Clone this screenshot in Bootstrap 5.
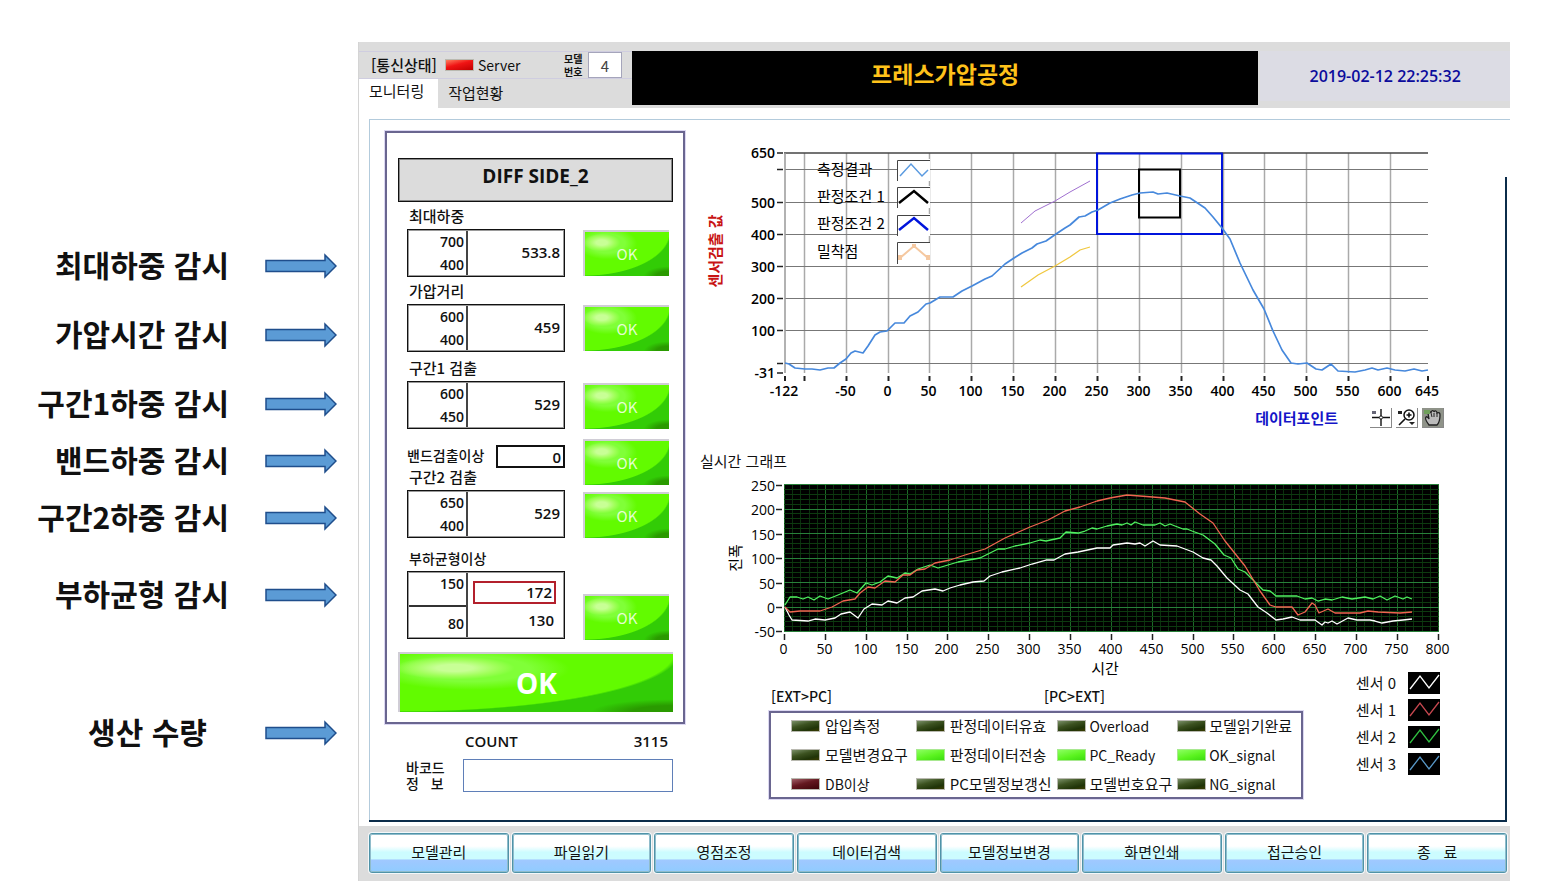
<!DOCTYPE html>
<html lang="ko">
<head>
<meta charset="utf-8">
<meta name="viewport" content="width=device-width, initial-scale=1">
<title>프레스가압공정</title>
<link href="https://cdn.jsdelivr.net/npm/bootstrap@5.3.0/dist/css/bootstrap.min.css" rel="stylesheet">
<style>
  body { font-family: "Noto Sans CJK KR", sans-serif; font-size: 15px; line-height: 20px; color: #111; background: #fff; }
  .num { font-family: "Open Sans", "Noto Sans CJK KR", sans-serif; }

  /* annotations beside the screen */
  .notes { flex: 0 0 358px; padding-top: 246px; font-size: 30px; line-height: 36px; font-weight: 700; }
  .note { height: 40px; }
  .note + .note { margin-top: 17px; }
  .note.wide { margin-top: 29px; }
  .note.wider { margin-top: 37px; }
  .note.last { margin-top: 98px; }
  .note-text { width: 265px; padding-right: 36px; text-align: right; }
  .last .note-text { padding: 0 0 0 30px; text-align: center; }

  /* HMI frame */
  .hmi { flex: 1 1 0; min-width: 0; margin: 42px 33px 0 0; border-left: 1px solid #d4d4d4; }
  .hmi-head { background: #dcdcdc; padding-top: 9px; height: 66px; }
  .head-left { flex: 0 0 273px; }
  .status-line { height: 28px; border: 1px solid #cfcde0; border-width: 1px 0; padding-left: 12px; }
  .status-name { width: 74px; font-weight: 500; font-size: 15px; }
  .model-label { font-size: 10px; line-height: 13px; font-weight: 700; width: 24px; }
  .model-label span { display: block; height: 13px; }
  .model-no { width: 34px; height: 26px; border: 1px solid #a5a5bb; text-align: center; color: #444; padding: 0; background: #fff; margin-right: 10px; }
  .hmi-tabs .nav-link { border: 0; border-radius: 0; padding: 3px 10px; color: #111; height: 30px; line-height: 22px; }
  .hmi-tabs .nav-link.active { background: #fff; line-height: 18px; padding-right: 14px; }
  .head-title { flex: 627 1 0; background: #000; color: #ffc21a; font-size: 23px; line-height: 30px; font-weight: 700; height: 54px; padding-top: 7px; }
  .head-date { flex: 250 1 0; color: #0c0c9c; font-weight: 600; font-size: 16px; background: #dcdce4; height: 50px; margin-left: 2px; }
  .screen { margin: 11px 0 0 10px; border: solid #b3cbdc; border-width: 1px 0 0 1px; height: 703px; position: relative; padding: 11px 50px 0 15px; }
  .screen::after { content: ""; position: absolute; inset: 57px 3px 0 -1px; background:
      linear-gradient(#0b2c4a, #0b2c4a) right / 2px 100% no-repeat,
      linear-gradient(#0b2c4a, #0b2c4a) bottom / 100% 2px no-repeat; pointer-events: none; }

  /* measurement panel */
  .side { flex: 0 0 300px; }
  .judge { border: 2px solid #6a6690; outline: 1px solid #dcd8f2; height: 593px; padding: 25px 10px 0 11px; }
  .product { background: #dcdcdc; border: 1px solid #111; outline: 1px solid #888; outline-offset: -2px; height: 44px; font-size: 19px; line-height: 34px; font-weight: 700; text-align: center; }
  .values { width: 158px; margin: 4px 0 0 9px; }
  .cap { height: 20px; margin-bottom: 3px; font-size: 15px; font-weight: 500; padding-left: 2px; white-space: nowrap; }
  .cap.tight { font-size: 14px; }
  .limits { border: 1px solid #111; outline: 1px solid #9a9a9a; outline-offset: -2px; height: 48px; font-weight: 600; display: flex; }
  .lim { flex: 0 0 60px; border-right: 2px solid #444; text-align: right; padding-right: 2px; line-height: 23px; font-size: 14px; }
  .val { flex: 1; text-align: right; padding-right: 4px; line-height: 44px; font-size: 15px; }
  .balance { height: 68px; }
  .balance .lim { padding: 0; }
  .balance .lim div { height: 33px; padding-right: 2px; line-height: 24px; }
  .balance .lim div + div { border-top: 2px solid #333; line-height: 34px; }
  .balance .val { line-height: 22px; padding: 9px 8px 0 5px; }
  .over { border: 2px solid #b3202c; height: 23px; line-height: 19px; }
  .balance .val div { padding-right: 2px; }
  .under { padding-top: 5px; }
  .band { height: 22px; margin-top: 16px; }
  .band-val { border: 2px solid #111; width: 69px; height: 23px; text-align: right; line-height: 20px; padding-right: 2px; font-weight: 600; }
  .gap-a { margin-top: 4px; } .gap-b { margin-top: 6px; } .gap-c { margin-top: 10px; }
  .ok { border: solid #d0cdd6; border-width: 2px 0 0 2px; border-radius: 0; padding: 0; width: 86px; height: 46px; color: #e3ffd0; font-size: 15px; line-height: 44px; display: block;
    background:
      radial-gradient(ellipse 22% 20% at 20% 24%, #c8ff96 0 30%, #a0ff5a 70%, transparent 100%),
      radial-gradient(ellipse 36% 36% at 26% 26%, #80ff38 60%, transparent 100%),
      radial-gradient(ellipse 102% 100% at 0% 0%, #62fb00 98%, transparent 100%),
      radial-gradient(ellipse 30% 22% at 100% 100%, #2a9a00 50%, transparent 100%), #32cc06; }
  .lights { margin: 28px 4px 0 0; display: grid; grid-template-rows: 75px 78px 56px 53px 102px 46px; height: 410px; }
  .ok-main { width: 100%; height: 60px; font-size: 28px; line-height: 56px; font-weight: 700; color: #fff; margin-top: 12px; }
  .count { margin: 7px 17px 0 80px; font-weight: 600; }
  .barcode { margin: 8px 12px 0 21px; }
  .barcode label { width: 57px; font-size: 14px; line-height: 16px; font-weight: 500; white-space: pre; }
  .barcode input { flex: 1; min-width: 0; height: 33px; border: 1px solid #5f7fb8; }

  /* charts */
  .charts { min-width: 0; flex: 1; padding: 9px 0 0 15px; }
  svg text { font-family: "Open Sans", "Noto Sans CJK KR", sans-serif; font-size: 14px; }
  svg .ko { font-family: "Noto Sans CJK KR", sans-serif; font-size: 15px; }
  .tools { height: 26px; margin-top: 3px; padding-right: 16px; }
  .axis-name { color: #1414c8; font-weight: 700; margin-right: 32px; }
  .tool { width: 22px; height: 20px; padding: 0; border: solid #888; border-width: 0 1px 1px 0; background: #fff; line-height: 0; }
  .tool.on { background: #8f9389; }
  .live-title { margin-top: 20px; height: 20px; }
  .under-live { margin-top: -12px; }
  .io-wrap { flex: 0 1 534px; margin-left: 69px; padding-top: 14px; }
  .io-heads { padding: 5px 0 5px 2px; display: grid; grid-template-columns: 273fr 259fr; font-weight: 500; font-size: 14px; }
  .io { border: 2px solid #6a6690; outline: 1px solid #dcd8f2; height: 88px; display: grid; grid-template-columns: 125fr 142fr 120fr 124fr; grid-auto-rows: 29px; padding-left: 20px; white-space: nowrap; }
  .io > div { display: flex; align-items: center; gap: 5px; height: 26px; }
  .io > div:nth-child(4n), .io > div:nth-child(4n + 3) { gap: 3px; }
  .latin { font-size: 14px; }
  .led { width: 29px; height: 12px; flex: none; border: 1px solid #b9b9b0; background: linear-gradient(165deg, #7a9068 0, #3c5220 40%, #203408 75%, #3a3c00); }
  .led.lit { background: linear-gradient(165deg, #8cff60, #5cf420 55%, #3cdc10); border-color: #a8e890; }
  .led.red { background: linear-gradient(165deg, #a06068, #641820 45%, #3c0408); }
  .led.alarm { background: linear-gradient(165deg, #ff8060, #f01414 45%, #c00000); }
  .sensors { margin: 2px 20px 0 auto; display: grid; grid-auto-rows: 27px; }
  .sensors div { display: flex; align-items: center; gap: 12px; }
  .sensors svg { width: 32px; height: 22px; background: #000; }
  .s0 { color: #fff; } .s1 { color: #c84850; } .s2 { color: #30c040; } .s3 { color: #5898c8; }

  /* command bar */
  .commands { background: #dcdcdc; margin-top: 4px; padding: 7px 3px 8px 10px; display: grid; grid-template-columns: repeat(8, 1fr); gap: 3px; }
  .cmd { border: 1px solid #4f93a8; outline: 1px solid #8fbccb; outline-offset: -2px; border-radius: 3px; height: 40px; padding: 0 0 2px; box-shadow: 0 0 0 1px #f4f8fa; white-space: pre;
    background: linear-gradient(#fff 0 32%, #ccfcff 48% 66%, #a0c8ff 68%, #90ccff 100%); color: #111; }
</style>
<script src="https://cdn.jsdelivr.net/npm/bootstrap@5.3.0/dist/js/bootstrap.bundle.min.js"></script>
</head>
<body>
<svg width="0" height="0" class="position-absolute" aria-hidden="true">
  <symbol id="arrow" viewBox="0 0 72 26"><path d="M1 7.500H60V2L71 13 60 24V18.500H1Z" fill="#5b9bd5" stroke="#1f4e8c" stroke-width="1.500"/></symbol>
  <symbol id="wave" viewBox="0 0 32 22"><path d="M2 17 12 4 21 16 31 3" fill="none" stroke="currentColor" stroke-width="1.300"/></symbol>
</svg>
<div class="d-flex">
  <aside class="notes">
    <div class="note d-flex"><div class="note-text">최대하중 감시</div><svg width="72" height="40"><use href="#arrow"/></svg></div>
    <div class="note wide d-flex"><div class="note-text">가압시간 감시</div><svg width="72" height="40"><use href="#arrow"/></svg></div>
    <div class="note wide d-flex"><div class="note-text">구간1하중 감시</div><svg width="72" height="40"><use href="#arrow"/></svg></div>
    <div class="note d-flex"><div class="note-text">밴드하중 감시</div><svg width="72" height="40"><use href="#arrow"/></svg></div>
    <div class="note d-flex"><div class="note-text">구간2하중 감시</div><svg width="72" height="40"><use href="#arrow"/></svg></div>
    <div class="note wider d-flex"><div class="note-text">부하균형 감시</div><svg width="72" height="40"><use href="#arrow"/></svg></div>
    <div class="note last d-flex"><div class="note-text">생산 수량</div><svg width="72" height="40"><use href="#arrow"/></svg></div>
  </aside>

  <main class="hmi">
    <header class="hmi-head d-flex">
      <div class="head-left">
        <div class="status-line d-flex align-items-center">
          <span class="status-name">[통신상태]</span>
          <span class="led alarm"></span><span class="latin ms-1">Server</span>
          <label class="model-label ms-auto" for="modelNo"><span>모델</span><span>번호</span></label>
          <input class="model-no" id="modelNo" value="4">
        </div>
        <nav class="nav hmi-tabs">
          <a class="nav-link active" href="#monitor">모니터링</a>
          <a class="nav-link" href="#work">작업현황</a>
        </nav>
      </div>
      <h1 class="head-title text-center mb-0">프레스가압공정</h1>
      <div class="head-date num d-flex align-items-center justify-content-center">2019-02-12 22:25:32</div>
    </header>

    <section class="screen d-flex" id="monitor">
      <div class="side">
        <div class="judge">
          <div class="product num">DIFF SIDE_2</div>
          <div class="d-flex justify-content-between">
            <div class="values">
              <div class="cap">최대하중</div>
              <div class="limits num"><div class="lim">700<br>400</div><div class="val">533.8</div></div>
              <div class="cap gap-a">가압거리</div>
              <div class="limits num"><div class="lim">600<br>400</div><div class="val">459</div></div>
              <div class="cap gap-b">구간1 검출</div>
              <div class="limits num"><div class="lim">600<br>450</div><div class="val">529</div></div>
              <div class="band d-flex justify-content-between"><div class="cap tight ps-0">밴드검출이상</div><div class="band-val num">0</div></div>
              <div class="cap">구간2 검출</div>
              <div class="limits num"><div class="lim">650<br>400</div><div class="val">529</div></div>
              <div class="cap tight gap-c">부하균형이상</div>
              <div class="limits balance num"><div class="lim"><div>150</div><div>80</div></div><div class="val"><div class="over">172</div><div class="under">130</div></div></div>
            </div>
            <div class="lights">
              <button type="button" class="ok">OK</button><button type="button" class="ok">OK</button><button type="button" class="ok">OK</button>
              <button type="button" class="ok">OK</button><button type="button" class="ok">OK</button><button type="button" class="ok">OK</button>
            </div>
          </div>
          <button type="button" class="ok ok-main num">OK</button>
        </div>
        <div class="count num d-flex justify-content-between"><span>COUNT</span><span>3115</span></div>
        <div class="barcode d-flex"><label for="barcode">바코드
정   보</label><input id="barcode" type="text"></div>
      </div>

      <div class="charts">
        <svg class="d-block w-100" viewBox="700 140 760 262" id="press">
          <g id="pressGrid"></g>
          <text class="ko" transform="translate(721 251) rotate(-90)" text-anchor="middle" fill="#c81414" font-weight="700">센서검출 값</text>
          <path d="M897 159h33v22h-33zM897 186h33v22h-33zM897 214h33v22h-33zM897 242h33v22h-33z" fill="#fff"/>
          <path d="M897.500 181V160.500H930M897.500 208V187.500H930M897.500 236V215.500H930M897.500 264V242.500H930" fill="none" stroke="#444"/>
          <text class="ko" x="817" y="175">측정결과</text><text class="ko" x="817" y="202">판정조건 1</text><text class="ko" x="817" y="229">판정조건 2</text><text class="ko" x="817" y="257">밀착점</text>
          <g fill="none" stroke-width="2.500">
            <path d="M900 176 911 164 922 176 928 170" stroke="#5a9ae0" stroke-width="1.500"/>
            <path d="M899 203 914 191 928 203" stroke="#000"/>
            <path d="M899 230 914 218 928 230" stroke="#0014dc"/>
            <path d="M900 258 914 246 928 258" stroke="#f5c8a0" stroke-width="2"/>
          </g>
          <path d="M898 255h4v5h-4zM912 244h4v4h-4zM926 255h4v5h-4z" fill="#f5c8a0"/>
          <g fill="none">
            <path d="M1021 223 1035 211 1055 201 1070 192 1090 181" stroke="#a070d0"/>
            <path d="M1021 287 1038 275 1055 266 1070 257 1080 250 1090 247" stroke="#f0c840" stroke-width="1.300"/>
            <rect x="1097" y="153.500" width="125" height="80.500" stroke="#0014dc" stroke-width="2"/>
            <rect x="1139" y="169.500" width="41" height="48" stroke="#000" stroke-width="2"/>
            <path d="M785 363 789 364 795 368 805 369 812 369 820 370 828 368 834 368 840 363 846 359 851 353 855 351 863 353 868 346 875 335 880 332 887 331 895 323 904 323 910 316 918 312 926 304 930 303 940 297 953 297 962 291 972 286 985 279 992 276 1005 264 1014 258 1022 253 1032 248 1037 244 1046 241 1056 234 1065 228 1070 225 1079 217 1085 216 1092 212 1098 210 1110 203 1120 199 1132 195 1140 193 1153 192 1158 194 1167 193 1180 196 1190 198 1205 208 1213 217 1222 228 1230 239 1240 263 1253 290 1264 309 1273 331 1282 350 1291 363 1298 364 1307 363 1316 369 1322 370 1331 364 1338 371 1355 372 1365 370 1372 368 1378 370 1387 368 1395 370 1405 371 1414 369 1422 371 1428 370" stroke="#4688dc" stroke-width="1.700" stroke-linejoin="round"/>
          </g>
        </svg>
        <div class="tools d-flex align-items-center justify-content-end">
          <span class="axis-name">데이터포인트</span>
          <button type="button" class="tool" aria-label="커서"><svg width="20" height="19" viewBox="0 0 20 19"><path d="M10 1v7M10 11v7M1 9.500h7M12 9.500h7" stroke="#111" stroke-width="1.400"/><circle cx="10" cy="9.500" r="1.600" fill="none" stroke="#111"/><path d="M1 3h4v3H1z" fill="#667"/></svg></button>
          <button type="button" class="tool mx-1" aria-label="확대"><svg width="20" height="19" viewBox="0 0 20 19"><circle cx="12" cy="7" r="5" fill="none" stroke="#111" stroke-width="1.500"/><path d="M12 4.500v5M9.500 7h5M8 11 2 17" stroke="#111" stroke-width="1.600"/><path d="M12 14h6l-3 3zM1 3h4v3H1z" fill="#222"/></svg></button>
          <button type="button" class="tool on" aria-label="이동"><svg width="20" height="19" viewBox="0 0 20 19"><path d="M6 17C3 13 2 10 3 9s3 2 3 2L5 5c1-2 3-1 3 0 0-3 3-3 3-1 1-2 3-1 3 1 2-1 3 0 3 2 0 4 0 7-3 10Z" fill="#bbb" stroke="#222" stroke-width="1.300"/><path d="M8 5l1 4M11 5v4M14 5v4" stroke="#222"/><path d="M1 2h6v4H1z" fill="#6fa05a"/></svg></button>
        </div>
        <div class="live-title">실시간 그래프</div>
        <svg class="d-block w-100" viewBox="700 472 760 208" id="live">
          <rect x="784" y="485" width="655" height="148" fill="#000"/>
          <g id="liveGrid"></g>
          <text class="ko" transform="translate(741 559) rotate(-90)" text-anchor="middle">진폭</text>
          <text class="ko" x="1105" y="675" text-anchor="middle">시간</text>
          <g fill="none" stroke-width="1.300" stroke-linejoin="round">
            <path stroke="#fff" d="M785 608 789 616 792 621 808 622 815 620 825 621 835 619 841 615 850 613 858 619 864 610 872 605 882 606 888 602 897 604 905 599 913 598 922 592 935 590 943 592 950 589 960 586 973 583 984 582 990 577 1002 573 1020 569 1032 565 1046 561 1054 561 1065 555 1078 553 1097 549 1110 549 1113 546 1127 544 1135 545 1140 544 1145 547 1153 542 1160 546 1177 547 1193 553 1203 559 1211 561 1217 567 1227 579 1240 591 1248 595 1258 608 1267 614 1276 621 1283 620 1292 618 1300 621 1315 621 1322 626 1325 623 1328 624 1332 622 1337 625 1348 619 1357 621 1370 621 1375 622 1382 624 1393 622 1403 621 1412 620"/>
            <path stroke="#50f060" d="M785 606 790 598 797 598 803 600 808 598 814 601 820 597 828 600 838 596 850 591 857 594 866 584 872 586 880 583 888 577 897 579 905 574 910 575 918 570 930 566 938 569 948 566 958 563 980 559 988 555 998 550 1005 550 1015 547 1030 544 1040 541 1046 542 1060 539 1066 533 1078 534 1085 532 1092 529 1097 530 1107 527 1117 525 1122 526 1127 524 1131 526 1135 523 1143 526 1155 526 1160 524 1165 527 1170 525 1175 527 1183 530 1187 530 1192 532 1203 536 1215 545 1224 556 1231 559 1238 570 1245 573 1255 583 1263 591 1270 592 1276 597 1297 597 1305 600 1312 599 1318 602 1325 600 1332 601 1342 598 1352 600 1365 598 1373 600 1380 597 1387 601 1395 597 1403 600 1407 598 1412 600"/>
            <path stroke="#f06450" d="M785 608 790 613 800 612 820 612 832 608 843 602 855 600 860 594 868 588 875 589 885 582 895 583 903 576 910 576 917 571 925 570 935 564 950 561 965 556 985 550 1005 539 1030 528 1048 521 1065 512 1080 508 1097 502 1110 499 1127 496 1140 497 1165 499 1185 503 1200 515 1213 524 1225 542 1245 567 1260 592 1270 606 1276 608 1292 608 1298 616 1305 613 1312 604 1315 606 1319 614 1328 610 1335 614 1360 614 1368 612 1378 613 1400 614 1412 613"/>
          </g>
        </svg>
        <div class="under-live d-flex">
          <div class="io-wrap">
            <div class="io-heads"><span>[EXT&gt;PC]</span><span>[PC&gt;EXT]</span></div>
            <div class="io">
              <div><i class="led"></i>압입측정</div><div><i class="led"></i>판정데이터유효</div><div class="latin"><i class="led"></i>Overload</div><div><i class="led"></i>모델읽기완료</div>
              <div><i class="led"></i>모델변경요구</div><div><i class="led lit"></i>판정데이터전송</div><div class="latin"><i class="led lit"></i>PC_Ready</div><div class="latin"><i class="led lit"></i>OK_signal</div>
              <div class="latin"><i class="led red"></i>DB이상</div><div><i class="led"></i>PC모델정보갱신</div><div><i class="led"></i>모델번호요구</div><div class="latin"><i class="led"></i>NG_signal</div>
            </div>
          </div>
          <div class="sensors">
            <div>센서 0<svg class="s0"><use href="#wave"/></svg></div>
            <div>센서 1<svg class="s1"><use href="#wave"/></svg></div>
            <div>센서 2<svg class="s2"><use href="#wave"/></svg></div>
            <div>센서 3<svg class="s3"><use href="#wave"/></svg></div>
          </div>
        </div>
      </div>
    </section>

    <footer class="commands">
      <button type="button" class="cmd">모델관리</button><button type="button" class="cmd">파일읽기</button><button type="button" class="cmd">영점조정</button><button type="button" class="cmd">데이터검색</button>
      <button type="button" class="cmd">모델정보변경</button><button type="button" class="cmd">화면인쇄</button><button type="button" class="cmd">접근승인</button><button type="button" class="cmd">종   료</button>
    </footer>
  </main>
</div>
<script>
  // grid lines, ticks and tick labels of both charts
  const line = (x1, y1, x2, y2, c, w = 1) => `<path d="M${x1} ${y1}L${x2} ${y2}" stroke="${c}" stroke-width="${w}"/>`;
  const label = (x, y, t, a, w) => `<text x="${x}" y="${y}" text-anchor="${a}" font-weight="${w}">${t}</text>`;
  let g = '';
  for (let v = -100; v <= 600; v += 50) {
    const x = Math.round(887.5 + v * 0.8375) + .5;
    g += line(x, 153, x, 373, '#aaa', 1.5) + line(x, 376, x, 381, '#222', 2);
    if (v > -100) g += label(x - 1, 396, v, 'middle', 600);
  }
  for (const v of [0, 100, 200, 300, 400, 500, 600]) {
    const y = Math.round(362.5 - v * 0.322) + .5;
    g += line(785, y, 1428, y, '#777') + line(777, y, 783, y, '#222', 1.5);
    if (v && v < 600) g += label(775, y + 5, v, 'end', 600);
  }
  g += line(784, 153, 1428, 153, '#444', 1.5) + line(785, 153, 785, 373, '#999', 1.5);
  for (const [v, y] of [[650, 153], [-31, 373]]) g += line(777, y, 783, y, '#222', 1.5) + label(775, y + 5, v, 'end', 600);
  for (const [v, x] of [[-122, 785], [645, 1428]]) g += line(x, 376, x, 381, '#222', 2) + label(x - 1, 396, v, 'middle', 600);
  pressGrid.innerHTML = g;

  g = '';
  for (let i = 0; i <= 80; i++) { const x = Math.round(784 + i * 8.175) + .5; g += line(x, 485, x, 633, i % 5 ? '#0b300e' : '#1d6a28'); }
  for (let i = 0; i <= 30; i++) { const y = Math.round(485 + i * 4.9) + .5; g += line(784, y, 1439, y, i % 5 ? '#0d3a10' : '#28803a'); }
  for (let i = 0; i <= 16; i++) { const x = Math.round(784 + i * 40.85) + .5; g += line(x, 635, x, 641, '#222', 1.5) + label(x - 1, 655, i * 50, 'middle', 400); }
  for (let i = 0; i <= 6; i++) { const y = Math.round(486 + i * 24.4) + .5; g += line(776, y, 782, y, '#222', 1.5) + label(775, y + 5, 250 - i * 50, 'end', 400); }
  liveGrid.innerHTML = g;
</script>
</body>
</html>
